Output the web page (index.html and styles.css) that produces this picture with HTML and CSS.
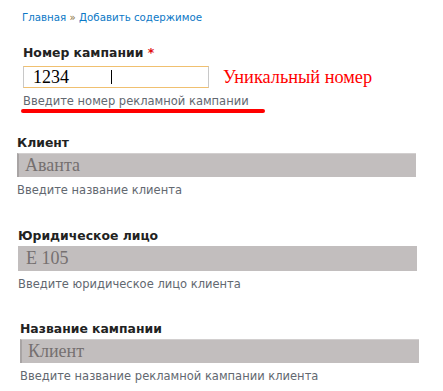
FILE: index.html
```html
<!DOCTYPE html>
<html lang="ru">
<head>
  <meta charset="UTF-8">
  <title>Добавить содержимое</title>
  <link rel="stylesheet" href="styles.css">
</head>
<body>
  <div class="breadcrumb">
    <a href="#">Главная</a> <span class="sep">»</span> <a href="#">Добавить содержимое</a>
  </div>

  <div class="field field-number">
    <label>Номер кампании <span class="req">*</span></label>
    <div class="row">
      <div class="input input-active">1234<span class="caret"></span></div>
      <span class="note">Уникальный номер</span>
    </div>
    <div class="hint">Введите номер рекламной кампании</div>
    <div class="underline"></div>
  </div>

  <div class="field field-client">
    <label>Клиент</label>
    <div class="input input-grey inset">Аванта</div>
    <div class="hint">Введите название клиента</div>
  </div>

  <div class="field field-legal">
    <label>Юридическое лицо</label>
    <div class="input input-grey">Е 105</div>
    <div class="hint">Введите юридическое лицо клиента</div>
  </div>

  <div class="field field-campaign">
    <label>Название кампании</label>
    <div class="input input-grey inset">Клиент</div>
    <div class="hint">Введите название рекламной кампании клиента</div>
  </div>
</body>
</html>
```

FILE: styles.css
```css
body {
  margin: 0;
  padding: 0;
  background-color: #fff;
  font-family: "DejaVu Sans", Verdana, sans-serif;
}

.breadcrumb {
  padding-top: 11px;
  margin-left: 22px;
  font-size: 10.25px;
  line-height: 13px;
}

.breadcrumb a {
  color: #0b78c6;
  text-decoration: none;
}

.breadcrumb .sep {
  color: #8a7040;
}

.field label {
  display: block;
  font-size: 12.4px;
  font-weight: bold;
  line-height: 15px;
  color: #222;
}

.req {
  color: #e01010;
}

.row {
  display: flex;
  align-items: center;
  margin-top: 6px;
}

.input {
  box-sizing: border-box;
  font-family: "Liberation Serif", "Times New Roman", serif;
  font-size: 18px;
}

.input-active {
  width: 186px;
  height: 22px;
  line-height: 20px;
  padding-left: 9px;
  border: 1px solid #c8c8c8;
  border-top-color: #f0c070;
  border-bottom-color: #f0c070;
  color: #000;
}

.caret {
  display: inline-block;
  width: 1px;
  height: 14px;
  margin-left: 42px;
  vertical-align: -1px;
  background-color: #000;
}

.note {
  margin-left: 14px;
  font-family: "Liberation Serif", "Times New Roman", serif;
  font-size: 18.3px;
  color: #f00;
}

.input-grey {
  width: 399px;
  height: 24px;
  line-height: 24px;
  margin-top: 3px;
  padding-left: 8px;
  background-color: #c2bebe;
  color: #757070;
}

.inset {
  border-left: 2px solid #a8a4a4;
  border-top: 1px solid #d2cfcf;
  line-height: 22px;
  padding-left: 6px;
}

.hint {
  font-size: 11.5px;
  line-height: 14px;
  margin-top: 6px;
  color: #626870;
}

.underline {
  width: 244px;
  height: 4px;
  margin: 1px 0 0 -2px;
  border-radius: 2px;
  background-color: #f00;
}

.field-number {
  margin: 21px 0 0 23px;
}

.field-client {
  margin: 22px 0 0 17px;
}

.field-legal {
  margin: 31px 0 0 18px;
}

.field-legal .input-grey {
  height: 25px;
}

.field-campaign {
  margin: 30px 0 0 20px;
}
```
